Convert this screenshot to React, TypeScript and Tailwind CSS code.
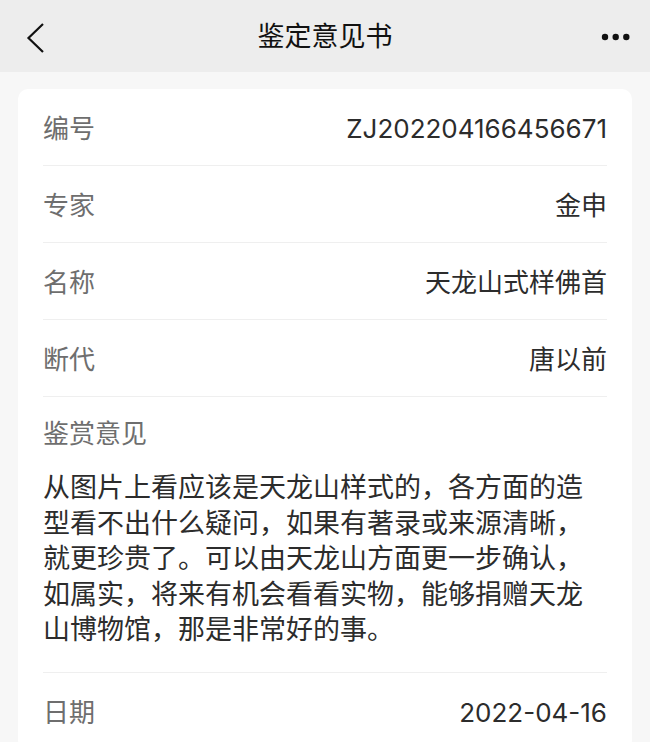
import React from "react";

const font = {
  fontFamily: '"Inter", "Noto Sans CJK SC", sans-serif',
};

function Row({ label, value, last }: { label: string; value: string; last?: boolean }) {
  return (
    <div
      className={`flex h-[77px] items-center justify-between pt-[2px] ${last ? "" : "border-b border-[#efefef]"}`}
    >
      <span className="text-[26px] text-[#6e6e6e]">{label}</span>
      <span className="text-[26px] text-[#2c2c2c]">{value}</span>
    </div>
  );
}

export default function App() {
  return (
    <div className="h-[742px] w-[650px] overflow-hidden bg-[#f7f7f7]" style={font}>
      <div className="relative flex h-[72px] items-center justify-center bg-[#ededed]">
        <svg className="absolute left-[24px] top-[22px]" width="24" height="32" viewBox="0 0 24 32">
          <path d="M19 2 L4.5 16 L19 30" fill="none" stroke="#111" strokeWidth="2.2" />
        </svg>
        <span className="pt-[2px] text-[27px] text-[#111]">鉴定意见书</span>
        <svg className="absolute left-[598px] top-[31px]" width="36" height="12" viewBox="0 0 36 12">
          <circle cx="7" cy="6" r="3.2" fill="#111" />
          <circle cx="17.7" cy="6" r="3.2" fill="#111" />
          <circle cx="28.3" cy="6" r="3.2" fill="#111" />
        </svg>
      </div>
      <div className="px-[18px] pt-[17px]">
        <div className="rounded-[10px] bg-white px-[25px]">
          <Row label="编号" value="ZJ202204166456671" />
          <Row label="专家" value="金申" />
          <Row label="名称" value="天龙山式样佛首" />
          <Row label="断代" value="唐以前" />
          <div className="border-b border-[#efefef] pb-[24px] pt-[19px]">
            <div className="text-[26px] leading-[36px] text-[#6e6e6e]">鉴赏意见</div>
            <p className="mt-[18px] text-[27px] leading-[35.6px] text-[#2c2c2c]">
              从图片上看应该是天龙山样式的，各方面的造
              <br />
              型看不出什么疑问，如果有著录或来源清晰，
              <br />
              就更珍贵了。可以由天龙山方面更一步确认，
              <br />
              如属实，将来有机会看看实物，能够捐赠天龙
              <br />
              山博物馆，那是非常好的事。
            </p>
          </div>
          <Row label="日期" value="2022-04-16" last />
        </div>
      </div>
    </div>
  );
}
